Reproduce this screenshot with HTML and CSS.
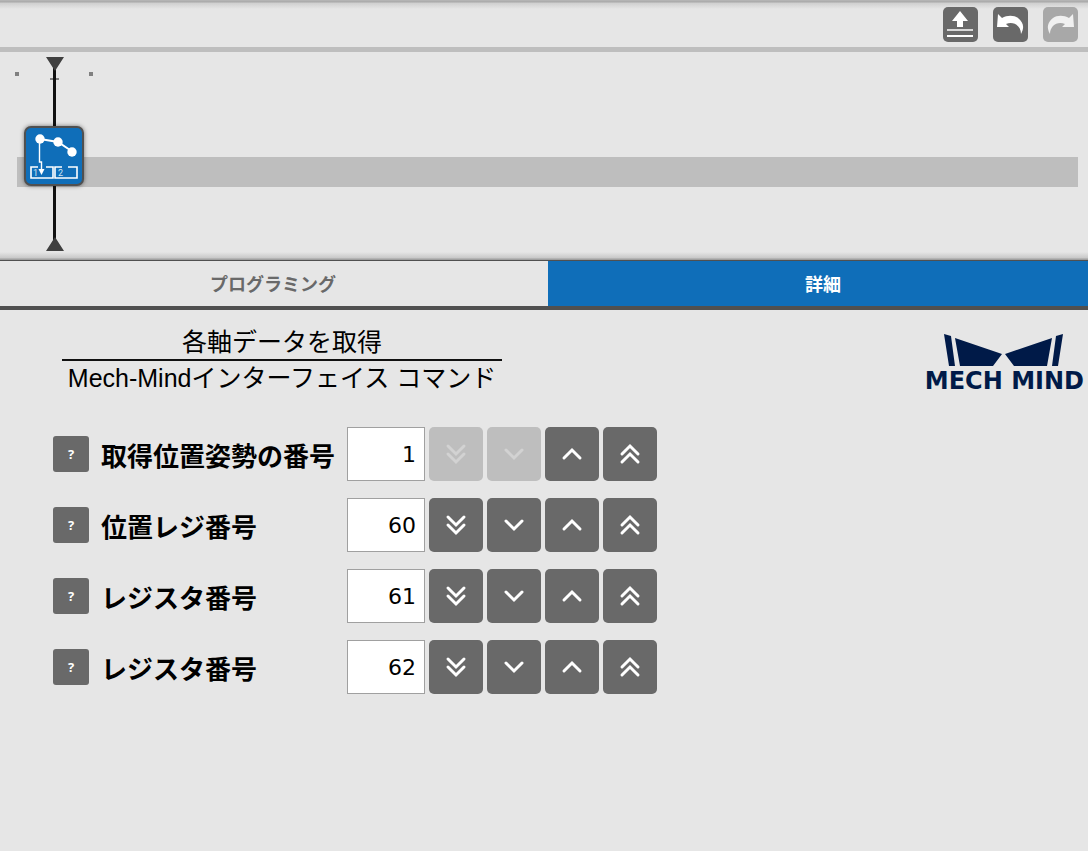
FILE: index.html
```html
<!DOCTYPE html>
<html lang="ja">
<head>
  <meta charset="UTF-8">
  <meta name="viewport" content="width=device-width, initial-scale=1">
  <title>各軸データを取得</title>
  <link rel="stylesheet" href="styles.css">
</head>
<body>
  <!-- shared arrow shapes -->
  <svg class="defs" aria-hidden="true">
    <symbol id="down2" viewBox="0 0 54 54"><path d="M19 19l8 8 8-8M19 27l8 8 8-8"/></symbol>
    <symbol id="down1" viewBox="0 0 54 54"><path d="M19 23l8 8 8-8"/></symbol>
    <symbol id="up1" viewBox="0 0 54 54"><path d="M19 31l8-8 8 8"/></symbol>
    <symbol id="up2" viewBox="0 0 54 54"><path d="M19 27l8-8 8 8M19 35l8-8 8 8"/></symbol>
    <symbol id="undo" viewBox="0 0 35 35"><path d="M5 7l4 4c5-3 12-3 16 0 5 4 7 9 3 16 0-8-7-13-15-10l3 3H4z"/></symbol>
  </svg>

  <header class="toolbar">
    <button type="button" class="tool" aria-label="アップロード">
      <svg viewBox="0 0 35 35">
        <path fill="#fff" d="M17 4l8 10h-5v6h-6v-6H9z"/>
        <path fill="#d8d8d8" d="M4 22h26v2H4z"/>
        <path fill="#fff" d="M4 28h26v2H4z"/>
      </svg>
    </button>
    <button type="button" class="tool" aria-label="元に戻す">
      <svg viewBox="0 0 35 35" fill="#fff"><use href="#undo"/></svg>
    </button>
    <button type="button" class="tool" aria-label="やり直す" disabled>
      <svg viewBox="0 0 35 35" fill="#f0f0f0"><g transform="matrix(-1 0 0 1 35 0)"><use href="#undo"/></g></svg>
    </button>
  </header>

  <section class="timeline">
    <div class="track"></div>
    <svg class="playhead" viewBox="0 0 78 194" aria-hidden="true">
      <path fill="#808080" d="M0 15h4v4H0zM74 15h4v4h-4zM35 21h9v2h-9z"/>
      <path fill="#111" d="M38 8h3v178h-3z"/>
      <path fill="#404040" d="M31 0h18l-9 14zM31 194h18l-9-14z"/>
    </svg>
    <button type="button" class="node" aria-label="各軸データを取得">
      <svg viewBox="0 0 56 56">
        <g fill="none" stroke="#fff">
          <path stroke-width="2" d="M14 11l18 3 15 10"/>
          <path stroke-width="1.4" d="M13.500 11v23h2v10"/>
          <path stroke-width="1.6" d="M12 39H5v11h22V39h-7M36 39h-7v11h22V39h-9"/>
        </g>
        <g fill="#fff">
          <circle cx="14" cy="11" r="4.700"/>
          <circle cx="32" cy="14" r="4.700"/>
          <circle cx="46" cy="24" r="4.700"/>
          <path d="M12.500 41h6l-3 6z"/>
        </g>
        <text x="7" y="48">1</text>
        <text x="32" y="48">2</text>
      </svg>
    </button>
  </section>

  <nav class="tabs">
    <button type="button" class="tab">プログラミング</button>
    <button type="button" class="tab active">詳細</button>
  </nav>

  <main class="content">
    <div class="heading">
      <h1>
        <span class="name">各軸データを取得</span>
        <span class="group">Mech-Mindインターフェイス コマンド</span>
      </h1>
      <div class="logo">
        <svg viewBox="0 0 120 34" aria-hidden="true">
          <path fill="#001a48" d="M0 1l7 2 4 30H5zM11 5l47 16-9 12H16zM119 1l-7 2-4 30h6zM108 5L61 21l9 12h33z"/>
        </svg>
        <span>MECH MIND</span>
      </div>
    </div>

    <form class="params">
      <div class="row">
        <button type="button" class="help" aria-label="ヘルプ">?</button>
        <label for="pose">取得位置姿勢の番号</label>
        <input type="text" inputmode="numeric" id="pose" value="1">
        <button type="button" class="step" aria-label="-10" disabled><svg><use href="#down2"/></svg></button>
        <button type="button" class="step" aria-label="-1" disabled><svg><use href="#down1"/></svg></button>
        <button type="button" class="step" aria-label="+1"><svg><use href="#up1"/></svg></button>
        <button type="button" class="step" aria-label="+10"><svg><use href="#up2"/></svg></button>
      </div>
      <div class="row">
        <button type="button" class="help" aria-label="ヘルプ">?</button>
        <label for="posReg">位置レジ番号</label>
        <input type="text" inputmode="numeric" id="posReg" value="60">
        <button type="button" class="step" aria-label="-10"><svg><use href="#down2"/></svg></button>
        <button type="button" class="step" aria-label="-1"><svg><use href="#down1"/></svg></button>
        <button type="button" class="step" aria-label="+1"><svg><use href="#up1"/></svg></button>
        <button type="button" class="step" aria-label="+10"><svg><use href="#up2"/></svg></button>
      </div>
      <div class="row">
        <button type="button" class="help" aria-label="ヘルプ">?</button>
        <label for="reg1">レジスタ番号</label>
        <input type="text" inputmode="numeric" id="reg1" value="61">
        <button type="button" class="step" aria-label="-10"><svg><use href="#down2"/></svg></button>
        <button type="button" class="step" aria-label="-1"><svg><use href="#down1"/></svg></button>
        <button type="button" class="step" aria-label="+1"><svg><use href="#up1"/></svg></button>
        <button type="button" class="step" aria-label="+10"><svg><use href="#up2"/></svg></button>
      </div>
      <div class="row">
        <button type="button" class="help" aria-label="ヘルプ">?</button>
        <label for="reg2">レジスタ番号</label>
        <input type="text" inputmode="numeric" id="reg2" value="62">
        <button type="button" class="step" aria-label="-10"><svg><use href="#down2"/></svg></button>
        <button type="button" class="step" aria-label="-1"><svg><use href="#down1"/></svg></button>
        <button type="button" class="step" aria-label="+1"><svg><use href="#up1"/></svg></button>
        <button type="button" class="step" aria-label="+10"><svg><use href="#up2"/></svg></button>
      </div>
    </form>
  </main>
</body>
</html>
```
FILE: styles.css
```css
* {
  box-sizing: border-box;
}
body {
  margin: 0;
  min-height: 100vh;
  background-color: #e6e6e6;
  color: #000;
  font-family: "Liberation Sans", "Noto Sans CJK JP", sans-serif;
}
button {
  padding: 0;
  border: none;
  font-family: inherit;
  cursor: pointer;
}
button:disabled {
  cursor: default;
}
svg {
  display: block;
}
.defs {
  position: absolute;
  width: 0;
  height: 0;
}

/* top bar */
.toolbar {
  display: flex;
  justify-content: flex-end;
  gap: 15px;
  height: 52px;
  padding: 7px 10px 0;
  border-bottom: 5px solid #bebebe;
  background: linear-gradient(#b8b8b8 0, #a8a8a8 2px, #cfcfcf 3px, #e6e6e6 9px);
}
.tool {
  width: 35px;
  height: 35px;
  border-radius: 5px;
  background-color: #696969;
}
.tool:disabled {
  background-color: #a8a8a8;
}

/* timeline */
.timeline {
  position: relative;
  height: 209px;
  padding: 105px 10px 0 17px;
  border-bottom: 1px solid #505050;
  background: linear-gradient(to top, #a0a0a0 1px, #c8c8c8 2px, #e6e6e6 8px);
}
.track {
  height: 30px;
  background-color: #bebebe;
}
.playhead {
  position: absolute;
  left: 15px;
  top: 5px;
  width: 78px;
  height: 194px;
}
.node {
  position: absolute;
  left: 24px;
  top: 74px;
  width: 60px;
  height: 60px;
  border: 2px solid #505050;
  border-radius: 7px;
  background-color: #0f6eb9;
  box-shadow: 0 0 4px rgba(0, 0, 0, 0.5);
}
.node text {
  fill: #cfe2f1;
  font-family: Roboto, sans-serif;
  font-size: 9px;
}

/* tabs */
.tabs {
  display: flex;
  border-bottom: 4px solid #505050;
}
.tab {
  flex: 1;
  height: 45px;
  padding-bottom: 2px;
  background-color: #e6e6e6;
  color: #696969;
  font-family: "Noto Sans CJK JP", sans-serif;
  font-size: 18px;
  font-weight: bold;
}
.tab:first-child {
  flex: 0 0 calc(50% + 4px);
  padding-right: 2px;
}
.tab.active {
  padding-left: 10px;
  background-color: #0f6eb9;
  color: #fff;
}

/* details */
.content {
  padding: 15px 4px 0 53px;
}
.heading {
  display: flex;
  justify-content: space-between;
  align-items: flex-start;
}
h1 {
  width: 440px;
  margin: 0 0 0 9px;
  font-size: 25px;
  font-weight: normal;
  line-height: 34px;
  text-align: center;
  white-space: nowrap;
}
h1 span {
  display: block;
}
h1 .name {
  border-bottom: 2px solid #111;
}
.logo {
  display: flex;
  flex-direction: column;
  align-items: center;
  padding-top: 8px;
  color: #001a48;
  font-family: "DejaVu Sans", sans-serif;
  font-size: 24px;
  font-weight: bold;
  line-height: 28px;
  white-space: nowrap;
}
.logo svg {
  width: 120px;
  height: 34px;
}
.params {
  display: grid;
  gap: 17px;
  margin-top: 32px;
}
.row {
  display: flex;
  align-items: center;
  gap: 4px;
}
.help {
  width: 36px;
  height: 36px;
  border-radius: 3px;
  background-color: #696969;
  color: #fff;
  font-family: "Open Sans", sans-serif;
  font-size: 13px;
  font-weight: bold;
}
.row label {
  width: 250px;
  padding: 2px 0 0 8px;
  font-family: "Noto Sans CJK JP", sans-serif;
  font-size: 26px;
  font-weight: bold;
  line-height: 38px;
  white-space: nowrap;
}
.row input {
  width: 78px;
  height: 54px;
  padding: 0 8px;
  border: 1px solid #a0a0a0;
  background-color: #fff;
  font-family: "DejaVu Sans", sans-serif;
  font-size: 22px;
  text-align: right;
}
.step {
  width: 54px;
  height: 54px;
  border-radius: 5px;
  background-color: #696969;
  color: #fff;
}
.step:disabled {
  background-color: #bebebe;
  color: #d2d2d2;
}
.step svg {
  width: 54px;
  height: 54px;
  fill: none;
  stroke: currentColor;
  stroke-width: 3px;
  stroke-linecap: round;
}
```
